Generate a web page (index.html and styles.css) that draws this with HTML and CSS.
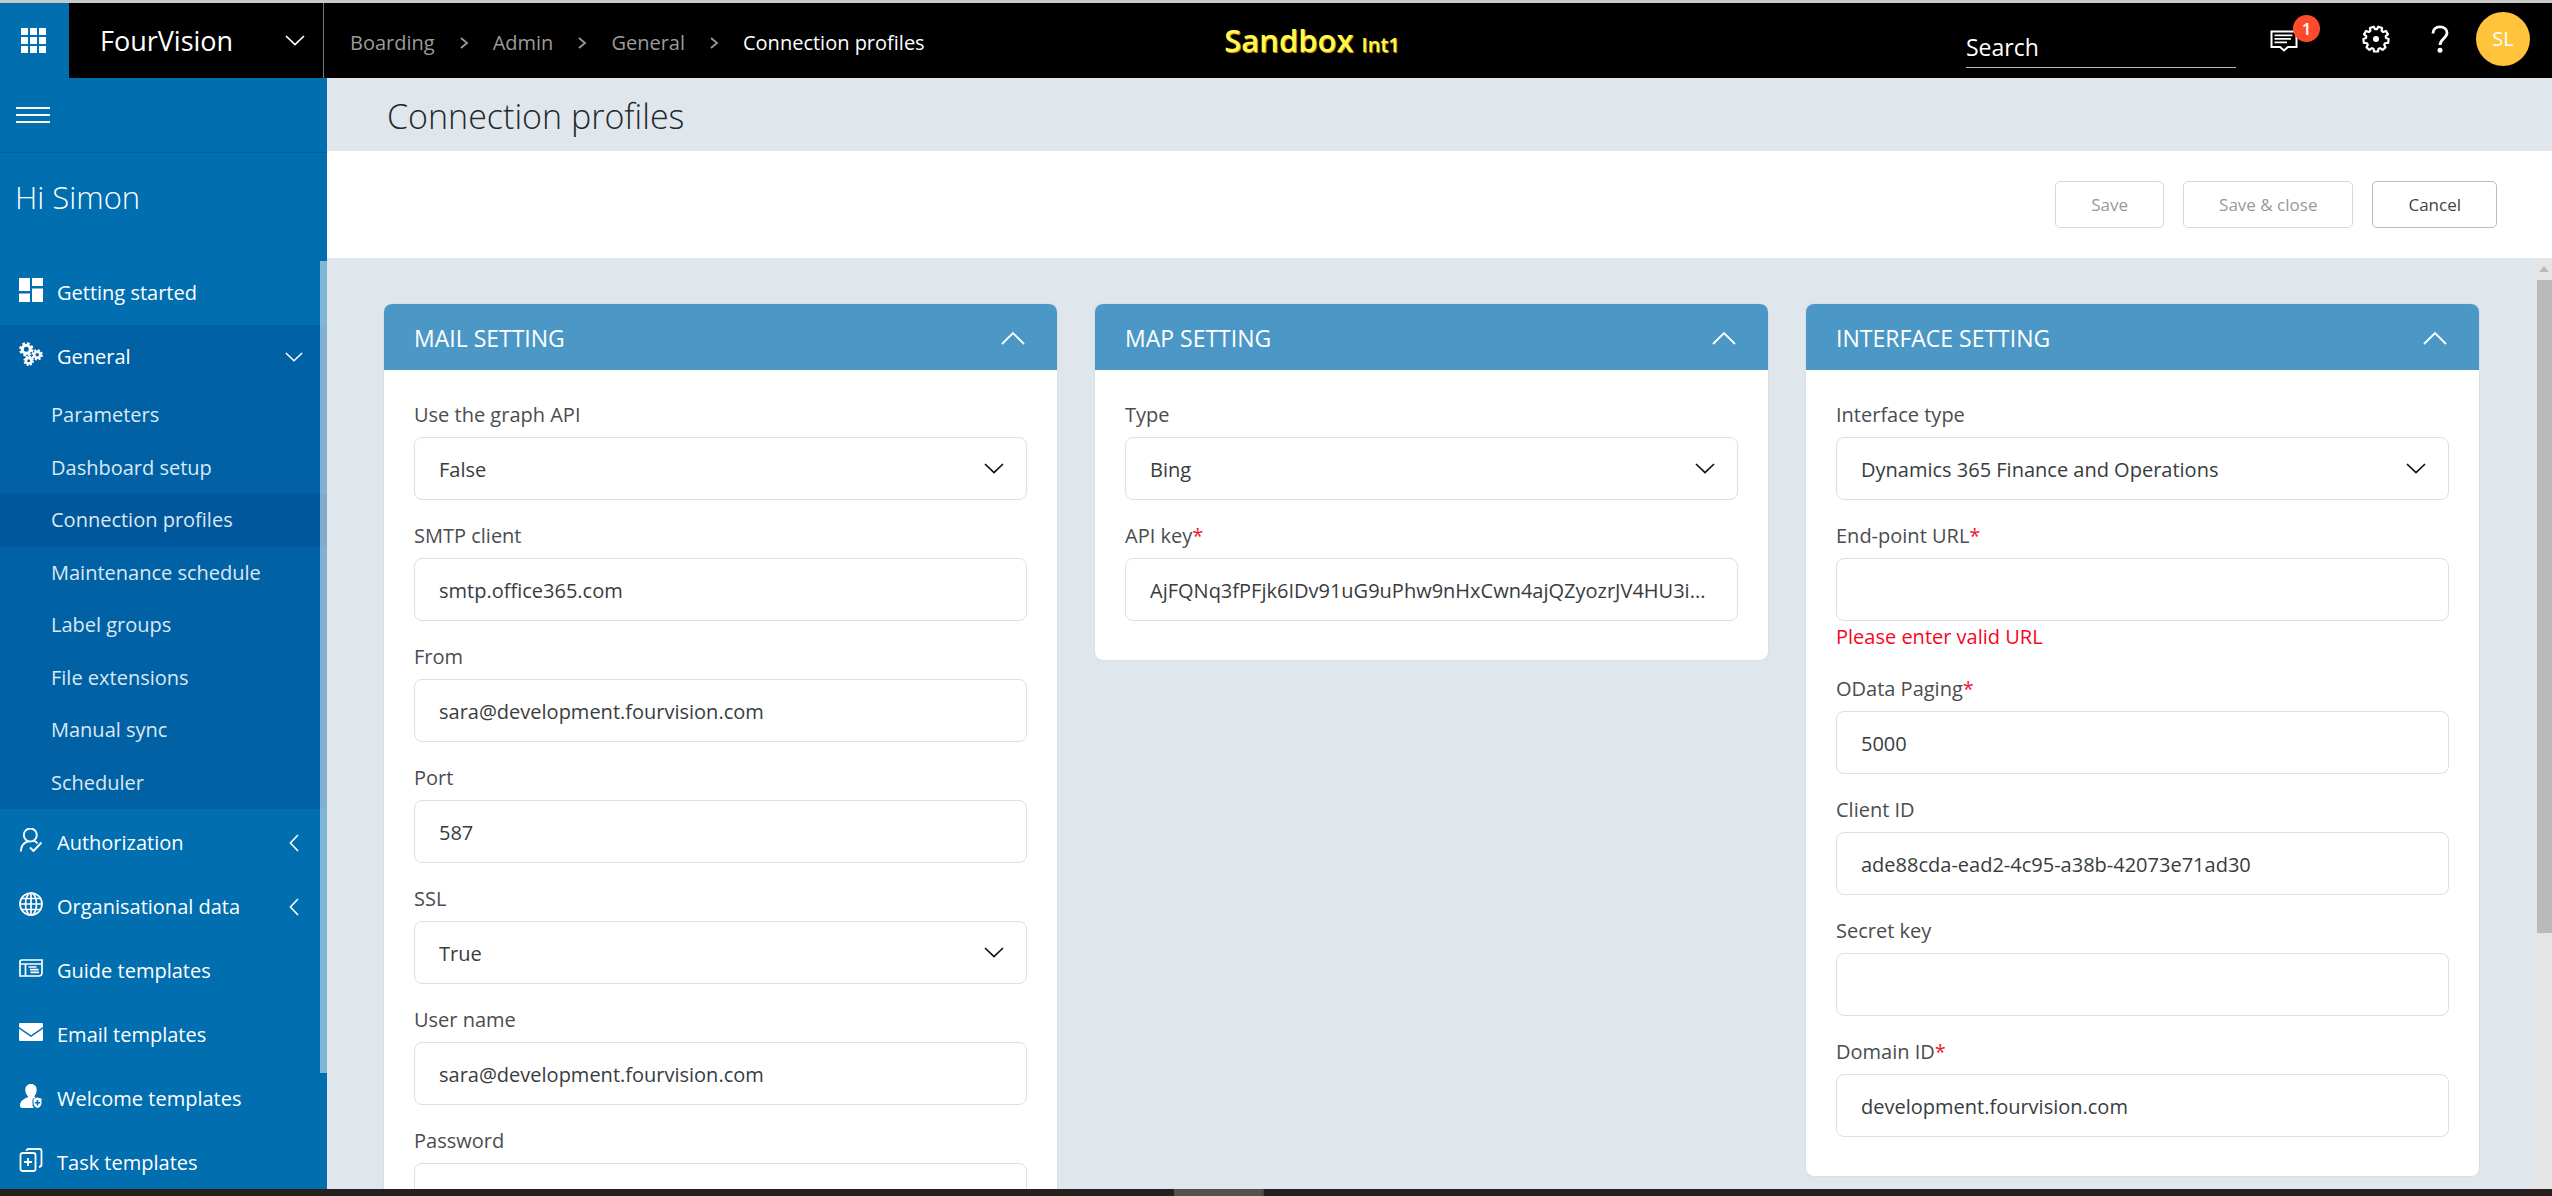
FILE: index.html
```html
<!DOCTYPE html>
<html lang="en">
<head>
<meta charset="utf-8">
<meta name="viewport" content="width=device-width, initial-scale=1">
<title>Connection profiles</title>
<link rel="stylesheet" href="styles.css">
</head>
<body>
<svg class="symbols" aria-hidden="true">
  <symbol id="chev-down" viewBox="0 0 20 11"><path d="M1 1l9 8.6L19 1" fill="none" stroke="currentColor" stroke-width="1.7"/></symbol>
  <symbol id="chev-up" viewBox="0 0 24 14"><path d="M1 13L12 2l11 11" fill="none" stroke="currentColor" stroke-width="1.8"/></symbol>
  <symbol id="chev-left" viewBox="0 0 10 18"><path d="M9 1L1.4 9 9 17" fill="none" stroke="currentColor" stroke-width="1.6"/></symbol>
  <symbol id="chev-right" viewBox="0 0 10 12"><path d="M2 1l6 5-6 5" fill="none" stroke="currentColor" stroke-width="1.8"/></symbol>
</svg>

<div class="app">
  <header class="topbar">
    <button class="launcher" aria-label="Apps">
      <svg width="25" height="25" viewBox="0 0 25 25" fill="currentColor"><path d="M0 0h7v7H0zM9 0h7v7H9zM18 0h7v7h-7zM0 9h7v7H0zM9 9h7v7H9zM18 9h7v7h-7zM0 18h7v7H0zM9 18h7v7H9zM18 18h7v7h-7z"/></svg>
    </button>
    <button class="company"><span>FourVision</span><svg width="20" height="11"><use href="#chev-down"/></svg></button>
    <nav class="crumbs" aria-label="Breadcrumb">
      <a href="#">Boarding</a>
      <svg width="10" height="12"><use href="#chev-right"/></svg>
      <a href="#">Admin</a>
      <svg width="10" height="12"><use href="#chev-right"/></svg>
      <a href="#">General</a>
      <svg width="10" height="12"><use href="#chev-right"/></svg>
      <span class="here">Connection profiles</span>
    </nav>
    <div class="env">Sandbox <small>Int1</small></div>
    <div class="tools">
      <input class="search" type="search" placeholder="Search" aria-label="Search">
      <button class="tool messages" aria-label="Messages">
        <svg width="28" height="22" viewBox="0 0 28 22" fill="none" stroke="currentColor" stroke-width="2"><path d="M1.5 1.5h25v15.500h-8.500l-4 3.500-4-3.500H1.500z"/><path d="M4.500 5.300h18M4.500 8.800h16.500M4.500 12.300h12.500" stroke-width="1.800"/></svg>
        <span class="badge">1</span>
      </button>
      <button class="tool" aria-label="Settings">
        <svg width="28" height="28" viewBox="-14 -14 28 28" fill="none" stroke="currentColor"><path stroke-width="2.200" stroke-linejoin="round" d="M-2.200-12.300L-1-9.800H1L2.200-12.300 6.100-11 5.600-8.200 7.200-7 9.900-8.100 12-4.700 9.700-2.900 10-1 12.600 0 12.200 3.900 9.300 4 8.200 5.700 9.500 8.300 6.600 10.800 4.200 9.200 2.500 9.800 2 12.500H-2L-2.500 9.800-4.200 9.200-6.600 10.800-9.500 8.300-8.200 5.700-9.300 4-12.200 3.900-12.600 0-10-1-9.700-2.900-12-4.700-9.900-8.100-7.200-7-5.600-8.200-6.100-11z"/><circle r="3" fill="currentColor" stroke="none"/></svg>
      </button>
      <button class="tool" aria-label="Help">
        <svg width="18" height="28" viewBox="0 0 18 28" fill="none" stroke="currentColor"><path stroke-width="2.800" d="M2 8.500C2 4 5 1.900 9 1.900s7 2.300 7 6.100c0 5-7 6-7 12"/><circle cx="9" cy="25.200" r="2.500" fill="currentColor" stroke="none"/></svg>
      </button>
      <button class="avatar">SL</button>
    </div>
  </header>

  <aside class="sidebar">
    <button class="burger" aria-label="Toggle menu"><i></i><i></i><i></i></button>
    <p class="hello">Hi Simon</p>
    <div class="menu">
      <ul class="nav">
        <li><a class="item" href="#">
          <svg width="24" height="24" viewBox="0 0 24 24" fill="currentColor"><path d="M0 0h11v13H0zM0 15.500h11V24H0zM13 0h11v8H13zM13 10.500h11V24H13z"/></svg>
          <span>Getting started</span></a></li>
        <li class="open"><a class="item" href="#">
          <svg width="24" height="24" viewBox="0 0 24 24" fill="none" stroke="currentColor"><g stroke-width="3"><circle cx="7.300" cy="7.300" r="4"/><circle cx="18.200" cy="12.800" r="3" stroke-width="2.600"/><circle cx="9.700" cy="18.700" r="2.800" stroke-width="2.600"/></g><circle cx="7.300" cy="7.300" r="6" stroke-width="2.400" stroke-dasharray="2.700 2.010"/><circle cx="18.200" cy="12.800" r="4.700" stroke-width="2" stroke-dasharray="2.100 1.590"/><circle cx="9.700" cy="18.700" r="4.400" stroke-width="1.800" stroke-dasharray="1.900 1.550"/></svg>
          <span>General</span><svg class="chev" width="18" height="10"><use href="#chev-down"/></svg></a>
          <ul class="sub">
            <li><a href="#">Parameters</a></li>
            <li><a href="#">Dashboard setup</a></li>
            <li class="active"><a href="#">Connection profiles</a></li>
            <li><a href="#">Maintenance schedule</a></li>
            <li><a href="#">Label groups</a></li>
            <li><a href="#">File extensions</a></li>
            <li><a href="#">Manual sync</a></li>
            <li><a href="#">Scheduler</a></li>
          </ul></li>
        <li><a class="item" href="#">
          <svg width="24" height="24" viewBox="0 0 24 24" fill="none" stroke="currentColor" stroke-width="1.900"><circle cx="11.300" cy="7" r="6.500"/><path d="M1.800 23.500c.2-5.500 3-9 7.400-10M15 12.500c1.600.8 2.600 1.700 3.500 2.900M11 19.500l3.500 3.500L22.500 14.500"/></svg>
          <span>Authorization</span><svg class="chev" width="18" height="18"><use href="#chev-left"/></svg></a></li>
        <li><a class="item" href="#">
          <svg width="24" height="24" viewBox="0 0 24 24" fill="none" stroke="currentColor" stroke-width="1.700"><circle cx="12" cy="12" r="11"/><ellipse cx="12" cy="12" rx="5.500" ry="11"/><path d="M12 1v22M1 12h22M3 6.500h18M3 17.500h18"/></svg>
          <span>Organisational data</span><svg class="chev" width="18" height="18"><use href="#chev-left"/></svg></a></li>
        <li><a class="item" href="#">
          <svg width="24" height="24" viewBox="0 0 24 24" fill="none" stroke="currentColor" stroke-width="1.700"><path d="M1 20V5.500Q1 4 3 4h20v12.500q0 3.500-3.500 3.500zM1 8h22M6.500 8v12M9.500 11h8M11 13.700h8.500M11.500 16.400h8.500"/></svg>
          <span>Guide templates</span></a></li>
        <li><a class="item" href="#">
          <svg width="24" height="24" viewBox="0 0 24 24" fill="currentColor"><path d="M1.200 3h21.600Q24 3 24 4.200V7L12 15.200 0 7V4.200Q0 3 1.200 3zM0 8.800l12 8.200 12-8.200v11q0 1.200-1.200 1.200H1.200Q0 21 0 19.800z"/></svg>
          <span>Email templates</span></a></li>
        <li><a class="item" href="#">
          <svg width="24" height="24" viewBox="0 0 24 24" fill="currentColor"><path d="M12 0c3.600 0 5.700 2.500 5.700 6 0 2.600-1 4.600-2.200 5.900-.3 1 .6 1.300 1.500 1.800-2 .2-3.500.6-3.500 1.800v5c0 1.400.6 2.400 1.500 3.500H3.500C2 24 1 23.200 1 21.500c0-4 3-6.500 7.500-8 .7-.3.500-1.200.200-1.600C7.400 10.600 6.300 8.600 6.300 6c0-3.500 2.100-6 5.700-6z"/><path fill-rule="evenodd" d="M14.500 14.500q2.500 0 4-1.200 1.500 1.200 4 1.200v4.500q0 3.500-4 5-4-1.500-4-5zM17.700 16v2h-1.900v1.600h1.900v2h1.600v-2h1.900V18h-1.900v-2z"/></svg>
          <span>Welcome templates</span></a></li>
        <li><a class="item" href="#">
          <svg width="24" height="24" viewBox="0 0 24 24" fill="none" stroke="currentColor" stroke-width="1.800"><rect x="1.500" y="5" width="15" height="18" rx="2"/><path d="M7.500 2.800Q7.700 1 9.500 1h11q2 0 2 2v13.500q0 2-2.500 2.500M9 10v8M5 14h8"/></svg>
          <span>Task templates</span></a></li>
      </ul>
      <div class="menu-scroll" aria-hidden="true"><div class="menu-thumb"></div></div>
    </div>
  </aside>

  <main class="page">
    <h1 class="title">Connection profiles</h1>
    <div class="actions">
      <button class="btn" disabled>Save</button>
      <button class="btn" disabled>Save &amp; close</button>
      <button class="btn">Cancel</button>
    </div>
    <div class="scroller">
      <div class="cards">
        <section class="card">
          <h2 class="card-head">MAIL SETTING <svg width="24" height="14"><use href="#chev-up"/></svg></h2>
          <div class="card-body">
            <div class="field"><label for="graph">Use the graph API</label>
              <div class="pick"><select id="graph"><option>False</option><option>True</option></select><svg width="20" height="11"><use href="#chev-down"/></svg></div></div>
            <div class="field"><label for="smtp">SMTP client</label><input id="smtp" type="text" value="smtp.office365.com"></div>
            <div class="field"><label for="from">From</label><input id="from" type="text" value="sara@development.fourvision.com"></div>
            <div class="field"><label for="port">Port</label><input id="port" type="text" value="587"></div>
            <div class="field"><label for="ssl">SSL</label>
              <div class="pick"><select id="ssl"><option>True</option><option>False</option></select><svg width="20" height="11"><use href="#chev-down"/></svg></div></div>
            <div class="field"><label for="user">User name</label><input id="user" type="text" value="sara@development.fourvision.com"></div>
            <div class="field"><label for="pass">Password</label><input id="pass" type="password"></div>
          </div>
        </section>

        <section class="card">
          <h2 class="card-head">MAP SETTING <svg width="24" height="14"><use href="#chev-up"/></svg></h2>
          <div class="card-body">
            <div class="field"><label for="type">Type</label>
              <div class="pick"><select id="type"><option>Bing</option></select><svg width="20" height="11"><use href="#chev-down"/></svg></div></div>
            <div class="field"><label for="key">API key<b>*</b></label><input id="key" type="text" value="AjFQNq3fPFjk6IDv91uG9uPhw9nHxCwn4ajQZyozrJV4HU3i..."></div>
          </div>
        </section>

        <section class="card">
          <h2 class="card-head">INTERFACE SETTING <svg width="24" height="14"><use href="#chev-up"/></svg></h2>
          <div class="card-body">
            <div class="field"><label for="itype">Interface type</label>
              <div class="pick"><select id="itype"><option>Dynamics 365 Finance and Operations</option></select><svg width="20" height="11"><use href="#chev-down"/></svg></div></div>
            <div class="field"><label for="url">End-point URL<b>*</b></label><input id="url" type="text" aria-describedby="url-error"><p class="error" id="url-error">Please enter valid URL</p></div>
            <div class="field"><label for="paging">OData Paging<b>*</b></label><input id="paging" type="text" value="5000"></div>
            <div class="field"><label for="client">Client ID</label><input id="client" type="text" value="ade88cda-ead2-4c95-a38b-42073e71ad30"></div>
            <div class="field"><label for="secret">Secret key</label><input id="secret" type="password"></div>
            <div class="field"><label for="domain">Domain ID<b>*</b></label><input id="domain" type="text" value="development.fourvision.com"></div>
          </div>
        </section>
      </div>
      <div class="scrollbar" aria-hidden="true">
        <svg width="10" height="6" viewBox="0 0 10 6" fill="#b9b9b9"><path d="M0 6l5-6 5 6z"/></svg>
        <div class="thumb"></div>
      </div>
    </div>
  </main>

  <footer class="strip"><span></span></footer>
</div>
</body>
</html>
```
FILE: styles.css
```css
* { box-sizing: border-box; }

body {
  margin: 0;
  font: 400 20px/28px "Open Sans", "Noto Sans", sans-serif;
  color: #24282c;
}

button, input, select { font: inherit; color: inherit; }
button { padding: 0; border: 0; background: none; cursor: pointer; }
a { color: inherit; text-decoration: none; }
ul { margin: 0; padding: 0; list-style: none; }
svg { flex: none; display: block; }
.symbols { position: absolute; width: 0; height: 0; }

.app {
  height: 100vh;
  display: grid;
  grid-template-columns: 327px minmax(0, 1fr);
  grid-template-rows: 78px minmax(0, 1fr) 7px;
}

/* Top bar */
.topbar {
  grid-column: 1 / -1;
  display: grid;
  grid-template-columns: 69px 255px minmax(0, 25fr) auto minmax(0, 32fr);
  border-top: 3px solid #c9c9c9;
  background: #000;
  color: #fff;
}
.launcher {
  display: grid;
  place-items: center;
  padding-right: 3px;
  background: #006eaf;
}
.company {
  display: flex;
  align-items: center;
  justify-content: space-between;
  padding: 0 18px 0 31px;
  border-right: 1px solid #777;
  font-size: 27px;
}
.crumbs {
  display: flex;
  align-items: center;
  gap: 24px;
  padding: 5px 0 0 26px;
  color: #9a9a9a;
  white-space: nowrap;
}
.crumbs .here { color: #fff; }
.env {
  padding-top: 12px;
  font-size: 31px;
  line-height: 50px;
  font-weight: 600;
  color: #fffb4a;
  text-shadow: 1px 1px 1px #ff9d1c;
}
.env small { font-size: 20px; }
.tools {
  display: flex;
  justify-content: flex-end;
  align-items: flex-start;
  padding-right: 22px;
}
.search {
  width: 270px;
  height: 46px;
  margin: 19px 34px 0 0;
  padding: 4px 0 0;
  border: 0;
  border-bottom: 1px solid #bbb;
  border-radius: 0;
  background: none;
  font-size: 23px;
  appearance: none;
  outline: none;
}
.search::placeholder { color: #fff; opacity: 1; }
.tool {
  height: 28px;
  margin: 22px 41px 0 0;
}
.messages { position: relative; margin-right: 64px; padding-top: 3px; }
.tool:nth-last-child(2) { margin-right: 27px; }
.badge {
  position: absolute;
  left: 23px;
  top: -10px;
  width: 27px;
  height: 27px;
  border-radius: 50%;
  background: #ff4a2c;
  font-size: 17px;
  font-weight: 600;
  line-height: 27px;
}
.avatar {
  width: 54px;
  height: 54px;
  margin-top: 9px;
  border-radius: 50%;
  background: #ffc43c;
}

/* Sidebar */
.sidebar {
  display: flex;
  flex-direction: column;
  min-height: 0;
  background: #006eaf;
  color: #fff;
}
.burger {
  display: flex;
  flex-direction: column;
  justify-content: center;
  gap: 5px;
  flex: none;
  height: 75px;
  padding: 0 16px 1px;
  border-bottom: 1px solid #005fa3;
}
.burger i { width: 34px; height: 2px; background: #fff; }
.hello {
  flex: none;
  height: 108px;
  margin: 0;
  padding: 23px 15px 0;
  font-size: 31px;
  line-height: 42px;
  font-weight: 300;
}
.menu {
  flex: 1;
  min-height: 0;
  overflow: hidden;
  display: grid;
}
.nav, .menu-scroll { grid-area: 1 / 1; min-height: 0; }
.item {
  display: flex;
  align-items: center;
  gap: 14px;
  height: 64px;
  padding: 0 24px 0 19px;
}
.item > svg:first-child { margin-bottom: 6px; }
.item .chev { margin-left: auto; }
.open { background: #0061a5; }
.open + li { margin-top: 2px; }
.sub {
  display: grid;
  grid-auto-rows: 1fr;
  height: 420px;
}
.sub li {
  display: flex;
  align-items: center;
  padding-left: 51px;
  color: #dbe8f2;
}
.sub .active { background: #00579b; }
.menu-scroll { justify-self: end; width: 7px; height: 100%; }
.menu-thumb { height: 87.5%; background: rgba(255, 255, 255, .5); }

/* Page */
.page {
  display: flex;
  flex-direction: column;
  min-width: 0;
  min-height: 0;
  background: #dfe7ed;
}
.title {
  margin: 0;
  padding: 16px 60px 13px;
  font-size: 34px;
  line-height: 44px;
  font-weight: 300;
}
.actions {
  display: flex;
  justify-content: flex-end;
  gap: 19px;
  padding: 30px 55px;
  background: #fff;
}
.btn {
  height: 47px;
  padding: 0 35px;
  border: 1px solid #b9bbbd;
  border-radius: 5px;
  background: #fff;
  font-size: 17px;
  color: #444;
}
.btn:disabled { border-color: #d5d7d9; color: #999; }
.scroller {
  flex: 1;
  min-height: 0;
  overflow: hidden;
  display: flex;
}
.cards {
  flex: 1;
  min-width: 0;
  display: grid;
  grid-template-columns: repeat(3, minmax(0, 1fr));
  align-items: start;
  gap: 38px;
  padding: 46px 57px 40px;
}
.card {
  overflow: hidden;
  border-radius: 8px;
  background: #fff;
  box-shadow: 0 0 2px rgba(0, 0, 0, .12);
}
.card-head {
  display: flex;
  align-items: center;
  justify-content: space-between;
  height: 66px;
  margin: 0;
  padding: 2px 32px 0 30px;
  background: #4b98c6;
  color: #fff;
  font-size: 23px;
  font-weight: 400;
}
.card-body {
  display: grid;
  gap: 22px;
  padding: 31px 30px 39px;
}
.field label { display: block; margin-bottom: 8px; color: #4a4d50; }
.field b { color: #f0142f; font-weight: 400; }
.field input, .field select {
  display: block;
  width: 100%;
  height: 63px;
  padding: 2px 24px 0;
  border: 1px solid #dcdfe4;
  border-radius: 8px;
  background: #fff;
  color: #383c40;
  text-overflow: ellipsis;
  appearance: none;
}
.pick { display: grid; align-items: center; }
.pick > * { grid-area: 1 / 1; }
.pick svg { justify-self: end; margin-right: 23px; color: #111; pointer-events: none; }
.error { margin: 2px 0; color: #f5061f; }

.scrollbar {
  display: flex;
  flex-direction: column;
  align-items: center;
  gap: 8px;
  width: 16px;
  padding-top: 8px;
  background: #e5e5e5;
}
.thumb { width: 100%; height: 653px; background: #bababa; border-left: 1px solid #e5e5e5; }

.strip {
  grid-column: 1 / -1;
  padding-left: 46%;
  background: #25201d;
}
.strip span { display: block; width: 90px; height: 100%; background: #57504b; border-right: 2px solid #444; }
```
